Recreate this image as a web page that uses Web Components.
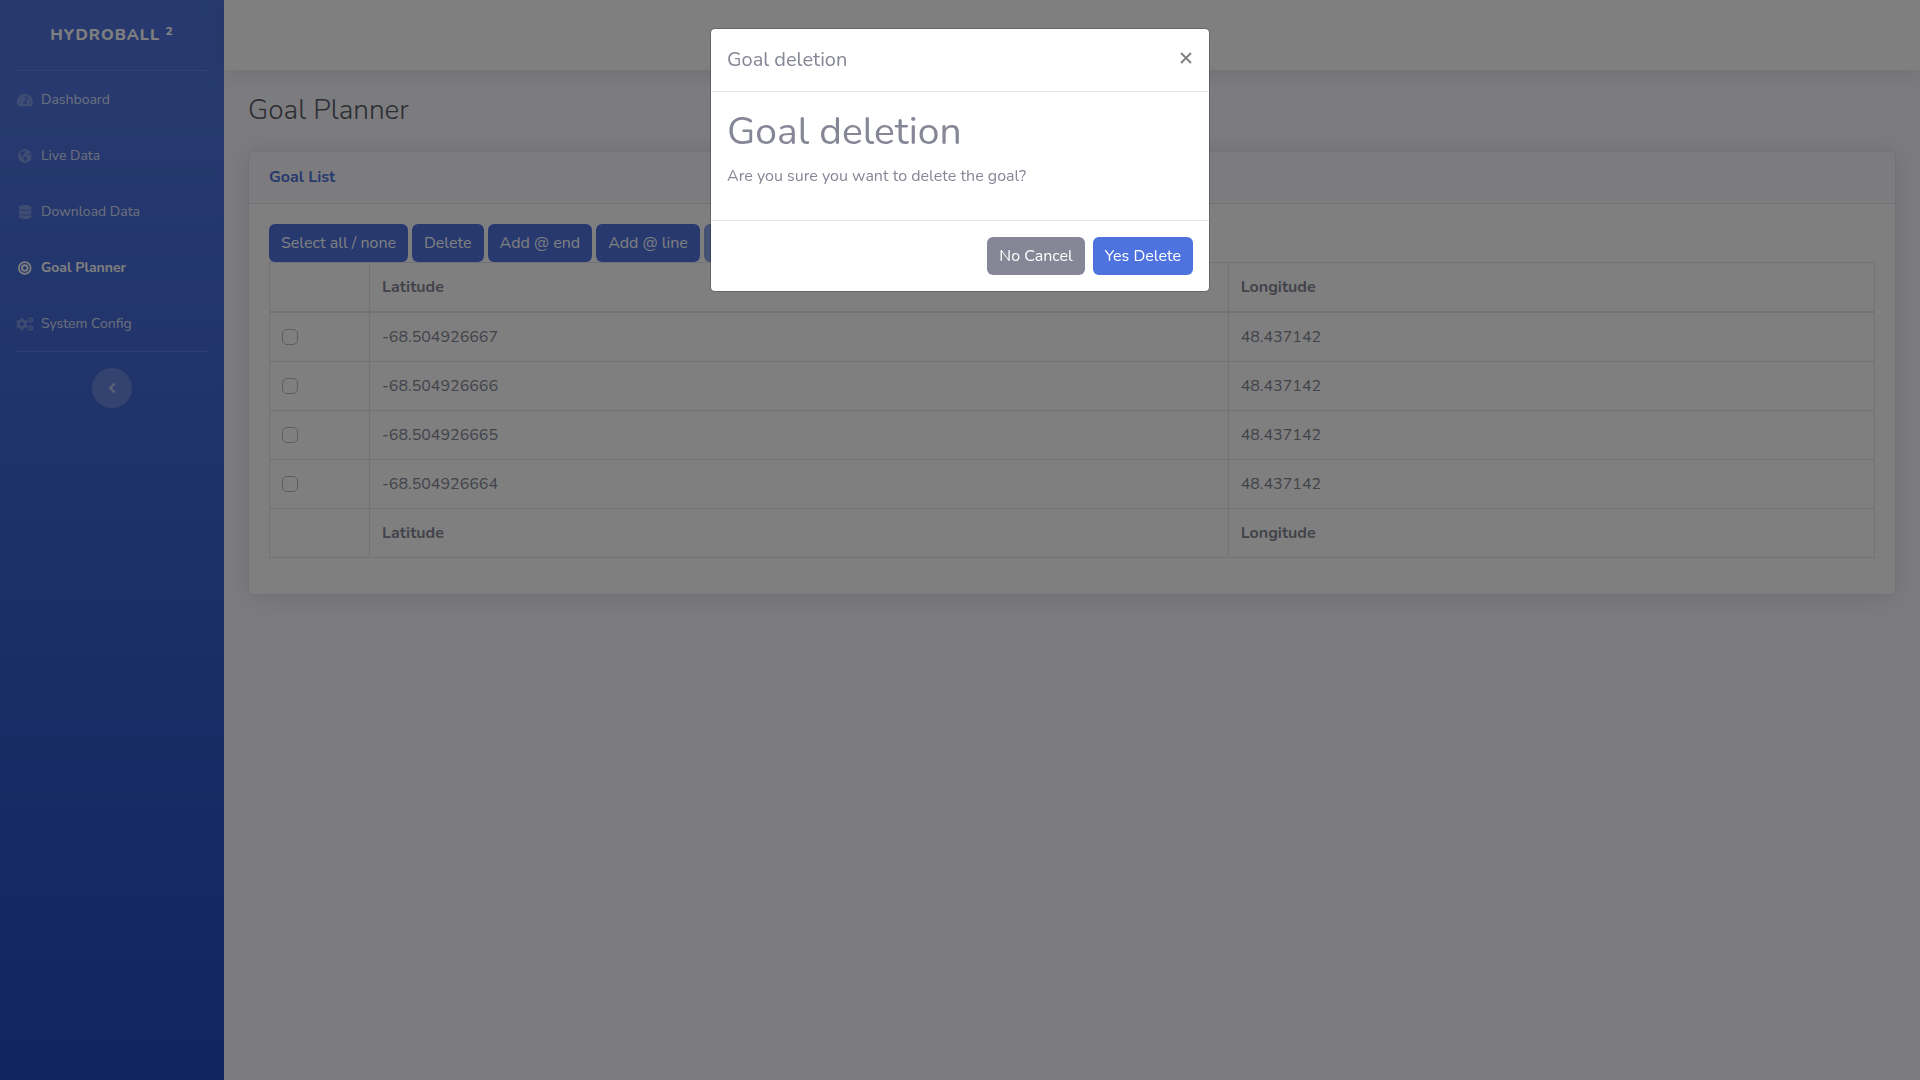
<!DOCTYPE html>
<html lang="en">
<head>
<meta charset="utf-8">
<title>Goal Planner</title>
<style>
  html, body { margin: 0; }
  body { font-family: Nunito, Lato, "Liberation Sans", sans-serif; font-size: 16px; line-height: 24px; color: #858796; background: #f8f9fc; }
</style>
</head>
<body>
<goal-app></goal-app>

<script>
const gear = (cx, cy, r, teeth, hole) => {
  let d = '';
  const step = Math.PI * 2 / teeth;
  const inner = r * 0.76;
  for (let i = 0; i < teeth; i++) {
    const a = i * step - Math.PI / 2;
    [[-0.32, inner], [-0.24, r], [0.24, r], [0.32, inner]].forEach(([o, q], j) => {
      d += (i || j ? 'L' : 'M') + (cx + q * Math.cos(a + o * step)).toFixed(1) + ' ' + (cy + q * Math.sin(a + o * step)).toFixed(1);
    });
  }
  return d + `ZM${cx - hole} ${cy}a${hole} ${hole} 0 1 0 ${hole * 2} 0a${hole} ${hole} 0 1 0 ${-hole * 2} 0Z`;
};

const ICONS = {
  dashboard: ['0 0 576 512', 'M288 32C128.94 32 0 160.94 0 320c0 52.8 14.25 102.26 39.06 144.8 5.61 9.62 16.3 15.2 27.44 15.2h443c11.14 0 21.83-5.58 27.44-15.2C561.75 422.26 576 372.8 576 320c0-159.06-128.94-288-288-288zm0 64c14.71 0 26.58 10.13 30.32 23.65-1.11 2.26-2.64 4.23-3.45 6.67l-9.22 27.67c-5.13 3.49-10.97 6.01-17.64 6.01-17.67 0-32-14.33-32-32S270.33 96 288 96zM96 384c-17.67 0-32-14.33-32-32s14.33-32 32-32 32 14.33 32 32-14.33 32-32 32zm48-160c-17.67 0-32-14.33-32-32s14.33-32 32-32 32 14.33 32 32-14.33 32-32 32zm246.77-72.41l-61.33 184C343.13 347.33 352 364.54 352 384c0 11.72-3.38 22.55-8.88 32H232.88c-5.5-9.45-8.88-20.28-8.88-32 0-33.94 26.5-61.43 59.9-63.59l61.34-184.01c4.17-12.56 17.73-19.45 30.36-15.17 12.57 4.19 19.35 17.79 15.17 30.36zm14.66 57.2l15.52-46.55c3.47-1.29 7.13-2.23 11.05-2.23 17.67 0 32 14.33 32 32s-14.33 32-32 32c-11.38-.01-20.89-6.28-26.57-15.22zM480 384c-17.67 0-32-14.33-32-32s14.33-32 32-32 32 14.33 32 32-14.33 32-32 32z'],
  globe: ['0 0 496 512', 'M248 8C111.03 8 0 119.03 0 256s111.03 248 248 248 248-111.03 248-248S384.97 8 248 8zm82.29 357.6c-3.9 3.88-7.99 7.95-11.31 11.28-2.99 3-5.1 6.7-6.17 10.71-1.51 5.66-2.73 11.38-4.77 16.87l-17.39 46.85c-13.76 3-28 4.69-42.65 4.69v-27.38c1.69-12.62-7.64-36.26-22.63-51.25-6-6-9.37-14.14-9.37-22.63v-32.01c0-11.64-6.27-22.34-16.46-27.97-14.37-7.95-34.81-19.06-48.81-26.11-11.48-5.78-22.1-13.14-31.65-21.75l-.8-.72a114.792 114.792 0 0 1-18.06-20.74c-9.38-13.77-24.66-36.42-34.59-51.14 20.47-45.5 57.36-82.04 103.2-101.89l24.01 12.01C203.48 89.74 216 82.01 216 70.11v-11.3c7.99-1.29 16.12-2.11 24.39-2.42l28.3 28.3c6.25 6.25 6.25 16.38 0 22.63L264 112l-10.34 10.34c-3.12 3.12-3.12 8.19 0 11.31l4.69 4.69c3.12 3.12 3.12 8.19 0 11.31l-8 8a8.008 8.008 0 0 1-5.66 2.34h-8.99c-2.08 0-4.08.81-5.58 2.27l-9.92 9.65a8.008 8.008 0 0 0-1.58 9.31l15.59 31.19c2.66 5.32-1.21 11.58-7.15 11.58h-5.64c-1.93 0-3.79-.7-5.24-1.96l-9.28-8.06a16.017 16.017 0 0 0-15.55-3.1l-31.17 10.39a11.95 11.95 0 0 0-8.17 11.34c0 4.53 2.56 8.66 6.61 10.69l11.08 5.54c9.41 4.71 19.79 7.16 30.31 7.16s22.59 27.29 32 32h66.75c8.49 0 16.62 3.37 22.63 9.37l13.69 13.69a30.503 30.503 0 0 1 8.93 21.57 46.536 46.536 0 0 1-13.72 32.98zM417 250c-5.79-1.45-10.84-5-14.15-9.97l-17.98-26.97a23.97 23.97 0 0 1 0-26.62l19.59-29.38c2.32-3.47 5.5-6.29 9.24-8.15l12.98-6.49C440.2 173.590 448 213.870 448 256c0 .670 0 1-.1 1.500z'],
  database: ['0 0 448 512', 'M448 73.143v45.714C448 159.143 347.667 192 224 192S0 159.143 0 118.857V73.143C0 32.857 100.333 0 224 0s224 32.857 224 73.143zM448 176v102.857C448 319.143 347.667 352 224 352S0 319.143 0 278.857V176c48.125 33.143 136.208 48.572 224 48.572S399.874 209.143 448 176zm0 160v102.857C448 479.143 347.667 512 224 512S0 479.143 0 438.857V336c48.125 33.143 136.208 48.572 224 48.572S399.874 369.143 448 336z'],
  bullseye: ['0 0 496 512', 'M248 8a248 248 0 1 0 0 496a248 248 0 1 0 0-496ZM248 72a184 184 0 1 1 0 368a184 184 0 1 1 0-368ZM248 120a136 136 0 1 0 0 272a136 136 0 1 0 0-272ZM248 188a68 68 0 1 1 0 136a68 68 0 1 1 0-136Z'],
  cogs: ['0 0 640 512', gear(216, 256, 222, 6, 76) + gear(534, 106, 112, 6, 40) + gear(534, 406, 112, 6, 40)],
  left: ['0 0 256 512', 'M31.7 239l136-136c9.4-9.4 24.6-9.4 33.9 0l22.6 22.6c9.4 9.4 9.4 24.6 0 33.9L127.9 256l96.4 96.4c9.4 9.4 9.4 24.6 0 33.9L201.7 409c-9.4 9.4-24.6 9.4-33.9 0l-136-136c-9.5-9.4-9.5-24.6-.1-34z']
};

class UiIcon extends HTMLElement {
  connectedCallback() {
    const [box, d] = ICONS[this.getAttribute('name')];
    this.attachShadow({ mode: 'open' }).innerHTML = `
      <style>
        :host { display: flex; justify-content: center; align-items: center; }
        svg { display: block; flex: none; height: var(--icon-size, 14px); fill: currentColor; fill-rule: evenodd; overflow: visible; }
      </style>
      <svg viewBox="${box}" aria-hidden="true"><path d="${d}"/></svg>`;
  }
}
customElements.define('ui-icon', UiIcon);

class NavItem extends HTMLElement {
  connectedCallback() {
    this.attachShadow({ mode: 'open' }).innerHTML = `
      <style>
        :host { display: block; }
        a { display: flex; align-items: center; gap: 7px; box-sizing: border-box; height: 56px; padding: 2px 16px 0; font-size: 14px; color: rgba(255,255,255,.8); text-decoration: none; }
        ui-icon { width: 18px; color: rgba(255,255,255,.3); }
        :host([active]) a { font-weight: 700; color: #fff; }
        :host([active]) ui-icon { color: #fff; }
      </style>
      <a href="#"><ui-icon name="${this.getAttribute('icon')}"></ui-icon><span><slot></slot></span></a>`;
  }
}
customElements.define('nav-item', NavItem);

class SideBar extends HTMLElement {
  connectedCallback() {
    this.attachShadow({ mode: 'open' }).innerHTML = `
      <style>
        :host { display: flex; flex-direction: column; width: 224px; flex: none; background: linear-gradient(180deg, #4e73df 10%, #224abe 100%); }
        .brand { display: flex; align-items: center; justify-content: center; height: 70px; color: #fff; font-size: 16px; font-weight: 800; text-decoration: none; text-transform: uppercase; letter-spacing: 1px; }
        sup { font-size: 12px; line-height: 0; vertical-align: 5px; }
        hr { margin: 0 16px; border: 0; border-top: 1px solid rgba(255,255,255,.15); }
        button { width: 40px; height: 40px; margin: 16px auto 0; padding: 0; border: 0; border-radius: 50%; background: rgba(255,255,255,.2); color: rgba(255,255,255,.5); --icon-size: 16px; }
      </style>
      <a class="brand" href="#"><span>Hydroball <sup>2</sup></span></a>
      <hr>
      <nav><slot></slot></nav>
      <hr>
      <button type="button" aria-label="Collapse sidebar"><ui-icon name="left"></ui-icon></button>`;
  }
}
customElements.define('side-bar', SideBar);

class UiButton extends HTMLElement {
  connectedCallback() {
    this.attachShadow({ mode: 'open' }).innerHTML = `
      <style>
        :host { display: block; }
        button { display: block; height: 38px; padding: 0 12px; border: 0; border-radius: 6px; background: #4e73df; color: #fff; font: inherit; white-space: nowrap; }
        :host([secondary]) button { background: #858796; }
        button:disabled { opacity: .65; }
      </style>
      <button type="button"${this.hasAttribute('disabled') ? ' disabled' : ''}><slot></slot></button>`;
  }
}
customElements.define('ui-button', UiButton);

class GoalTable extends HTMLElement {
  connectedCallback() {
    const rows = ['-68.504926667', '-68.504926666', '-68.504926665', '-68.504926664'].map((lat, i) =>
      `<tr><td><input type="checkbox" aria-label="Select goal ${i + 1}"></td><td>${lat}</td><td>48.437142</td></tr>`).join('');
    const head = '<tr><th></th><th>Latitude</th><th>Longitude</th></tr>';
    this.attachShadow({ mode: 'open' }).innerHTML = `
      <style>
        :host { display: block; }
        table { width: 100%; table-layout: fixed; border-collapse: collapse; }
        col.check { width: 100px; }
        col.lat { width: 53.5%; }
        th, td { height: 24px; padding: 12px; border: 1px solid #e3e6f0; text-align: left; vertical-align: top; }
        thead th { border-bottom-width: 2px; }
        th { font-weight: 700; }
        input { appearance: none; display: block; box-sizing: border-box; width: 16px; height: 16px; margin: 4px 0; border: 1px solid #b7b9cc; border-radius: 5px; background: #fff; }
      </style>
      <table>
        <colgroup><col class="check"><col class="lat"><col></colgroup>
        <thead>${head}</thead><tbody>${rows}</tbody><tfoot>${head}</tfoot>
      </table>`;
  }
}
customElements.define('goal-table', GoalTable);

class UiCard extends HTMLElement {
  connectedCallback() {
    this.attachShadow({ mode: 'open' }).innerHTML = `
      <style>
        :host { display: block; border: 1px solid #e3e6f0; border-radius: 6px; background: #fff; box-shadow: 0 2px 28px rgba(58,59,69,.15); }
        header { padding: 13px 20px 14px; border-bottom: 1px solid #e3e6f0; border-radius: 5px 5px 0 0; background: #f8f9fc; }
        h2 { margin: 0; font-size: 16px; line-height: 24px; font-weight: 700; color: #4e73df; }
        .body { padding: 20px 20px 36px; }
      </style>
      <header><h2>${this.getAttribute('heading')}</h2></header>
      <div class="body"><slot></slot></div>`;
  }
}
customElements.define('ui-card', UiCard);

class UiModal extends HTMLElement {
  connectedCallback() {
    this.attachShadow({ mode: 'open' }).innerHTML = `
      <style>
        :host { position: fixed; inset: 0; display: block; background: rgba(0,0,0,.5); }
        section { box-sizing: border-box; max-width: 500px; margin: 28px auto; border: 1px solid rgba(0,0,0,.2); border-radius: 5px; background: #fff; background-clip: padding-box; }
        header { display: flex; justify-content: space-between; align-items: flex-start; padding: 16px; border-bottom: 1px solid #e3e6f0; }
        h5 { margin: 0; font-size: 20px; line-height: 30px; font-weight: 400; }
        .close { padding: 7px 1px; border: 0; background: none; color: #7f7f7f; }
        .close svg { display: block; width: 12px; height: 12px; stroke: currentColor; stroke-width: 1.8; }
        .body { padding: 16px; }
        footer { display: flex; justify-content: flex-end; gap: 8px; padding: 16px; border-top: 1px solid #e3e6f0; }
      </style>
      <section role="dialog" aria-modal="true" aria-labelledby="title">
        <header><h5 id="title">${this.getAttribute('heading')}</h5>
          <button class="close" type="button" aria-label="Close"><svg viewBox="0 0 12 12"><path d="M1 1L11 11M11 1L1 11"/></svg></button></header>
        <div class="body"><slot></slot></div>
        <footer><slot name="actions"></slot></footer>
      </section>`;
  }
}
customElements.define('ui-modal', UiModal);

class GoalApp extends HTMLElement {
  connectedCallback() {
    this.attachShadow({ mode: 'open' }).innerHTML = `
      <style>
        :host { display: flex; min-height: 100vh; }
        .content { flex: 1; min-width: 0; }
        .topbar { height: 70px; background: #fff; box-shadow: 0 2px 28px rgba(58,59,69,.15); }
        main { padding: 24px; }
        .page { margin: 0 0 24px; font-size: 28px; line-height: 33px; font-weight: 300; color: #5a5c69; }
        .tools { display: flex; gap: 4px; }
        .ask { margin: 0 0 8px; font-size: 39px; line-height: 48px; font-weight: 400; }
        p { margin: 0 0 16px; }
      </style>
      <side-bar>
        <nav-item icon="dashboard">Dashboard</nav-item>
        <nav-item icon="globe">Live Data</nav-item>
        <nav-item icon="database">Download Data</nav-item>
        <nav-item icon="bullseye" active>Goal Planner</nav-item>
        <nav-item icon="cogs">System Config</nav-item>
      </side-bar>
      <div class="content">
        <div class="topbar"></div>
        <main>
          <h1 class="page">Goal Planner</h1>
          <ui-card heading="Goal List">
            <div class="tools">
              <ui-button>Select all / none</ui-button>
              <ui-button>Delete</ui-button>
              <ui-button>Add @ end</ui-button>
              <ui-button>Add @ line</ui-button>
              <ui-button disabled>Save</ui-button>
            </div>
            <goal-table></goal-table>
          </ui-card>
        </main>
      </div>
      <ui-modal heading="Goal deletion">
        <h1 class="ask">Goal deletion</h1>
        <p>Are you sure you want to delete the goal?</p>
        <ui-button slot="actions" secondary>No Cancel</ui-button>
        <ui-button slot="actions">Yes Delete</ui-button>
      </ui-modal>`;
  }
}
customElements.define('goal-app', GoalApp);
</script>
</body>
</html>
